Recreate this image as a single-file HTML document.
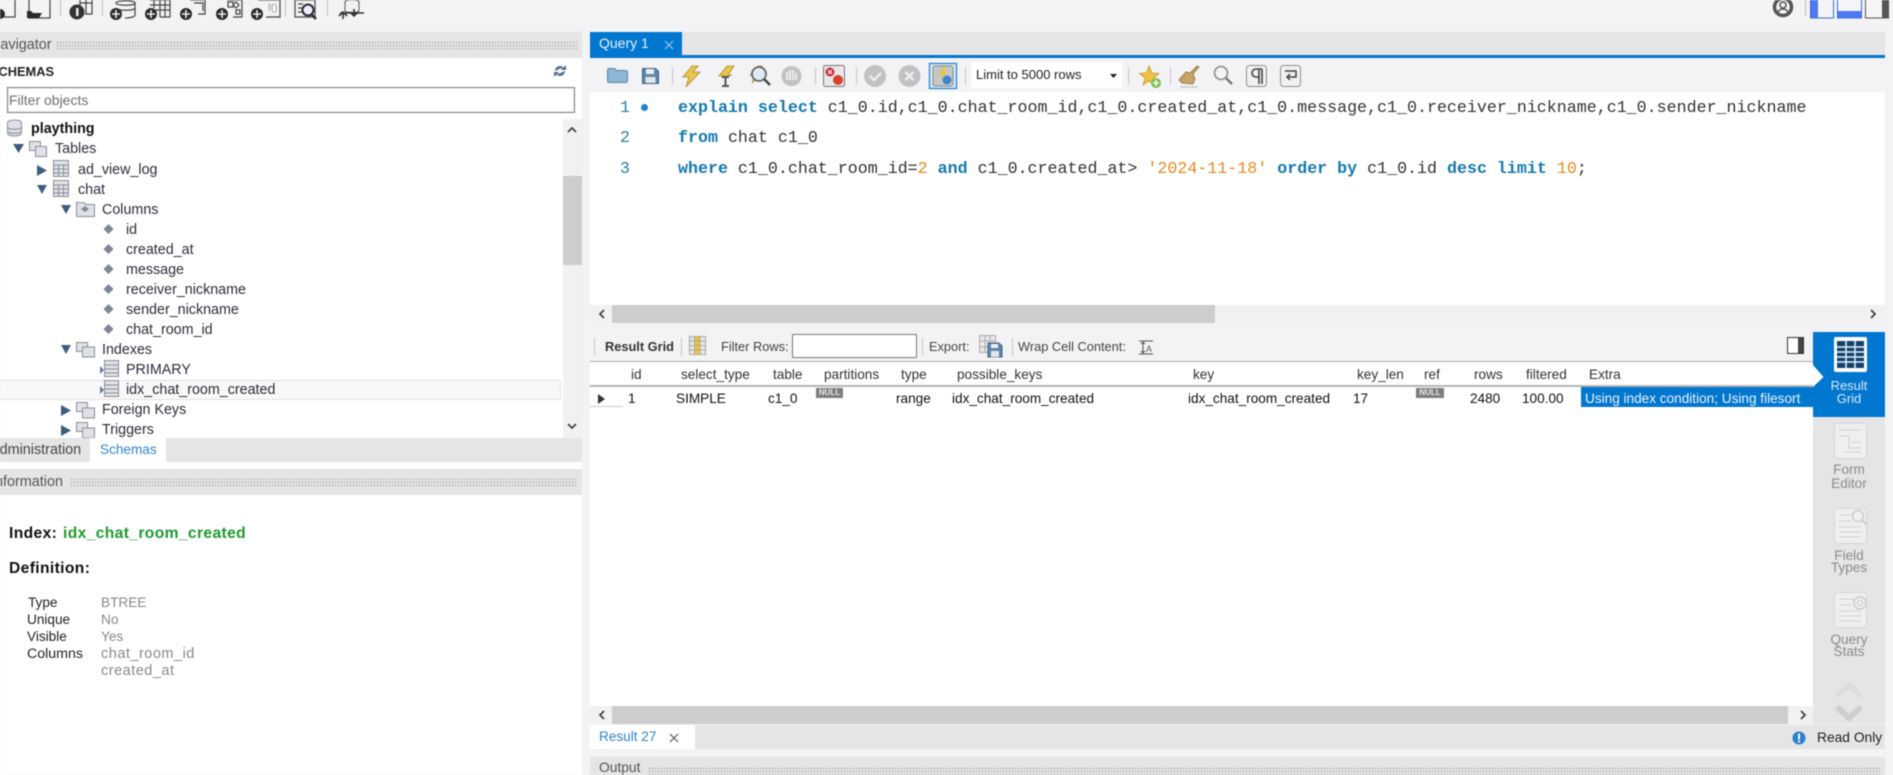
<!DOCTYPE html>
<html><head><meta charset="utf-8"><title>MySQL Workbench</title>
<style>
html,body{margin:0;padding:0;width:1893px;height:775px;overflow:hidden;background:#f3f3f5}
#p{position:relative;width:1893px;height:775px;overflow:hidden;background:#f3f3f5;filter:blur(.4px);font-family:"Liberation Sans",sans-serif;color:#111}
#p div,#p span,#p svg{position:absolute}
#p span{white-space:nowrap;line-height:20px;font-size:13.6px}
.hd{background:#e5e5e5}
.dots{background-image:radial-gradient(#b4b4b4 .7px,transparent .9px);background-size:3px 3px}
.tr span,span.tr{font-size:14.3px!important;color:#2c2c3a}
.sep{width:1px;background:#c4c4c8}
.m{font-family:"Liberation Mono",monospace!important;font-size:16.65px!important;color:#333;white-space:pre!important}
.m b{color:#1479ae}.m i{font-style:normal;color:#e5891f}
.g{color:#888!important}
.h{color:#333}
.ln{color:#2a7f9f;font-size:16.6px!important;font-family:"Liberation Mono",monospace!important}
.side{color:#8b8b8b;text-align:center;width:72px;left:1813px}
#p .rs{font-size:13px}
.nul{background:#7d7d7d;color:#e8e8e8;font-size:8px;font-weight:bold;text-align:center;line-height:10px;height:10px}
#p .bd{font-size:15.6px;letter-spacing:.38px;font-weight:bold;color:#111}
#p .us{font-size:14.5px;letter-spacing:.5px}
</style></head><body>
<div id="p">
<svg style="left:0;top:0" width="1893" height="24" viewBox="0 0 1893 24">
 <g fill="none" stroke="#444" stroke-width="1.2">
  <path d="M-3 0V17H15V0"/><path d="M29 0V18H50V0"/>
  <path d="M80 6V0M92 0V14H85M80 3H92M86 0V14"/>
  <path d="M116 3c0-3 19-3 19 0v12c0 2-5 3-10 3M116 3c0 3 19 3 19 0M116 8c0 3 19 3 19 0" />
  <path d="M150 0H170V17H160M154 0V8M160 0V17M165 0V17M150 5H170M150 10H170"/>
  <path d="M190 0H205V14H198M194 3H203V11"/>
  <path d="M227 0H242V17H233M228 2h5v5h-5zM236 2l3 3-3 3-3-3zM236 10h4v4h-4z"/>
  <path d="M258 0H280V17H266"/>
  <path d="M295 0H315V17H295zM298 4h5M298 8h5M298 12h5"/>
 </g>
 <text x="268" y="11" font-size="10" fill="#999" font-family="Liberation Sans">f()</text>
 <circle cx="0" cy="14" r="5" fill="#2a2a2a"/>
 <path d="M27 18V11H31L33 13H42L39 18Z" fill="#2a2a2a"/>
 <circle cx="77" cy="12" r="7.5" fill="#333"/><rect x="76" y="8" width="2.5" height="8" fill="#eee"/>
 <g fill="#2b2b2b"><circle cx="116" cy="14" r="6"/><circle cx="151" cy="14" r="6"/><circle cx="186" cy="14" r="6"/><circle cx="222" cy="14" r="6"/><circle cx="257" cy="14" r="6"/></g>
 <g stroke="#eee" stroke-width="1.6"><path d="M112 14h8M116 10v8M147 14h8M151 10v8M182 14h8M186 10v8M218 14h8M222 10v8M253 14h8M257 10v8"/></g>
 <circle cx="308" cy="10" r="5.5" fill="#eef" stroke="#2b2b2b" stroke-width="2"/><path d="M311 14l5 5" stroke="#2b2b2b" stroke-width="2.5"/>
 <path d="M345 2c0-3 14-3 14 0v9c0 2-14 2-14 0z" fill="#f2f2f4" stroke="#555"/>
 <path d="M339 16l4-4 4 4M343 12v7M350 12l4 4 4-4M354 16v-7M340 13h24" fill="none" stroke="#333" stroke-width="1.6"/>
 <g fill="#bcc0cc"><rect x="60" width="1" height="16"/><rect x="102" width="1" height="16"/><rect x="285" width="1" height="16"/><rect x="327" width="1" height="16"/><rect x="1805" width="1" height="16"/></g>
 <circle cx="1783" cy="7" r="8.5" fill="none" stroke="#555" stroke-width="3.5"/><circle cx="1783" cy="5" r="3" fill="none" stroke="#555" stroke-width="1.5"/><path d="M1778 12c2-4 8-4 10 0" fill="none" stroke="#555" stroke-width="1.5"/>
 <rect x="1810.5" y="-3" width="23" height="21" fill="#f5f5f8" stroke="#3b66e0"/><rect x="1811" y="-3" width="7" height="21" fill="#4c78f0"/>
 <rect x="1837.5" y="-3" width="24" height="21" fill="#f5f5f8" stroke="#3b66e0"/><rect x="1838" y="11" width="23" height="7" fill="#4c78f0"/>
 <rect x="1865.5" y="-3" width="23" height="21" fill="#f5f5f8" stroke="#555"/><rect x="1882" y="-3" width="7" height="21" fill="#555"/>
</svg>

<!-- LEFT -->
<div style="left:0;top:32px;width:582px;height:743px;background:#fff"></div>
<div class="hd" style="left:0;top:32px;width:582px;height:26px"></div>
<span style="left:-10px;top:35px;font-size:14.4px;color:#555">Navigator</span>
<div class="dots" style="left:56px;top:41px;width:521px;height:9px"></div>
<span style="left:-10px;top:62px;font-size:12.8px;font-weight:bold;color:#222">SCHEMAS</span>
<svg style="left:553px;top:64px" width="14" height="14" viewBox="0 0 14 14"><path d="M2 7A5 5 0 0 1 10 3L8 6h5V1l-2 2M12 7A5 5 0 0 1 4 11l2-3H1v5l2-2" fill="#4f7291"/></svg>
<div style="left:7px;top:87px;width:566px;height:24px;border:1px solid #7f7f7f;background:#fff;box-shadow:inset 0 0 0 1px #eee"></div>
<span style="left:9px;top:90px;font-size:14px;color:#6e6e6e">Filter objects</span>

<!-- scrollbar -->
<div style="left:563px;top:119px;width:19px;height:319px;background:#f1f1f1"></div>
<div style="left:563px;top:176px;width:19px;height:89px;background:#cdcdcd"></div>
<svg style="left:566px;top:124px" width="12" height="312" viewBox="0 0 12 312"><path d="M2 8l4-4 4 4M2 300l4 4 4-4" fill="none" stroke="#444" stroke-width="1.8"/></svg>

<div style="left:0;top:380px;width:560px;height:18px;background:#f8f8f8;border:1px solid #e2e2e2;border-left:0"></div>

<div class="tr" style="left:0;top:0;width:582px;height:438px;overflow:hidden">
<span style="left:31px;top:119px;font-weight:bold;color:#111">plaything</span>
<span style="left:55px;top:139px">Tables</span>
<span style="left:78px;top:160px">ad_view_log</span>
<span style="left:78px;top:180px">chat</span>
<span style="left:102px;top:200px">Columns</span>
<span style="left:126px;top:220px">id</span>
<span style="left:126px;top:240px">created_at</span>
<span style="left:126px;top:260px">message</span>
<span style="left:126px;top:280px">receiver_nickname</span>
<span style="left:126px;top:300px">sender_nickname</span>
<span style="left:126px;top:320px">chat_room_id</span>
<span style="left:102px;top:340px">Indexes</span>
<span style="left:126px;top:360px">PRIMARY</span>
<span style="left:126px;top:380px">idx_chat_room_created</span>
<span style="left:102px;top:400px">Foreign Keys</span>
<span style="left:102px;top:420px">Triggers</span>
</div>
<svg style="left:0;top:0" width="130" height="438" viewBox="0 0 130 438">
 <g fill="#3f5b80">
  <path d="M13 144H24L18.500 153Z"/><path d="M37 165L47 170.500 37 176Z"/><path d="M37 185H47L42 194Z"/>
  <path d="M61 205H71L66 214Z"/><path d="M61 345H71L66 354Z"/><path d="M61 405L71 410.500 61 416Z"/><path d="M61 425L71 430.500 61 436Z"/>
  <path d="M100 366l4 4-4 4zM100 386l4 4-4 4z" fill="#6a7b90"/>
 </g>
 <g fill="#dfe1e6" stroke="#8a8f98">
  <path d="M7.500 123c0-4 14-4 14 0v10c0 4-14 4-14 0z"/><path d="M7.500 127c0 3 14 3 14 0M7.500 131c0 3 14 3 14 0" fill="none"/>
  <rect x="29.500" y="141.500" width="11" height="9"/><rect x="35.500" y="146.500" width="11" height="10"/>
  <rect x="53.500" y="160.500" width="15" height="16"/><rect x="53.500" y="180.500" width="15" height="16"/>
  <path d="M53.500 165H68M53.500 169H68M53.500 173H68M58.500 165V176M63.500 165V176M53.500 185H68M53.500 189H68M53.500 193H68M58.500 185V196M63.500 185V196" fill="none"/>
  <path d="M76.500 202.500H84L86 204.500H94.500V216.500H76.500Z"/>
  <rect x="76.500" y="342.500" width="11" height="9"/><rect x="82.500" y="347" width="12" height="10"/>
  <rect x="76.500" y="402.500" width="11" height="9"/><rect x="82.500" y="408" width="12" height="10"/>
  <rect x="76.500" y="422.500" width="11" height="9"/><rect x="82.500" y="428" width="12" height="10"/>
  <rect x="104.500" y="360.500" width="14" height="16"/><rect x="104.500" y="380.500" width="14" height="16"/>
  <path d="M104.500 365H118M104.500 369H118M104.500 373H118M104.500 385H118M104.500 389H118M104.500 393H118" fill="none"/>
 </g>
 <path d="M81 209l4-3 4 3-4 3z" fill="#808a98"/>
 <g fill="#7d8796"><path d="M108.500 224l5 5-5 5-5-5zM108.500 244l5 5-5 5-5-5zM108.500 264l5 5-5 5-5-5zM108.500 284l5 5-5 5-5-5zM108.500 304l5 5-5 5-5-5zM108.500 324l5 5-5 5-5-5z"/></g>
</svg>

<div class="hd" style="left:0;top:438px;width:582px;height:24px"></div>
<div style="left:90px;top:438px;width:76px;height:24px;background:#fff"></div>
<span style="left:-10px;top:440px;font-size:14.4px;color:#444">Administration</span>
<span style="left:100px;top:440px;font-size:13.6px;color:#2f84cf">Schemas</span>
<div class="hd" style="left:0;top:469px;width:582px;height:26px"></div>
<span style="left:-9px;top:472px;font-size:14.4px;color:#555">Information</span>
<div class="dots" style="left:70px;top:478px;width:507px;height:9px"></div>

<span class="bd" style="left:9px;top:524px">Index:</span>
<span class="bd" style="left:63px;top:524px;color:#1d9a2c">idx_chat_room_created</span>
<span class="bd" style="left:9px;top:559px">Definition:</span>
<span style="left:28px;top:593px;font-size:13.600px;color:#222">Type</span><span style="left:101px;top:593px" class="g">BTREE</span>
<span style="left:27px;top:610px;font-size:13.600px;color:#222">Unique</span><span style="left:101px;top:610px" class="g">No</span>
<span style="left:27px;top:627px;font-size:13.600px;color:#222">Visible</span><span style="left:101px;top:627px" class="g">Yes</span>
<span style="left:27px;top:644px;font-size:14.200px;color:#222">Columns</span><span style="left:101px;top:644px" class="g us">chat_room_id</span>
<span style="left:101px;top:661px" class="g us">created_at</span>

<!-- RIGHT: query -->
<div class="hd" style="left:590px;top:32px;width:1295px;height:23px"></div>
<div style="left:590px;top:32px;width:92px;height:23px;background:#0277cf"></div>
<div style="left:590px;top:55px;width:1295px;height:3px;background:#0277cf"></div>
<span style="left:599px;top:33px;font-size:14px;color:#e8f2fb">Query 1</span>
<svg style="left:664px;top:40px" width="10" height="10" viewBox="0 0 10 10"><path d="M1 1l8 8M9 1l-8 8" stroke="#9cc7ea" stroke-width="1.200"/></svg>

<!-- query toolbar -->
<svg style="left:590px;top:58px" width="720" height="34" viewBox="590 58 720 34">
 <path d="M607.500 70.500q0-2 2-2h5l2 2h9q2 0 2 2v8q0 2-2 2h-16q-2 0-2-2z" fill="#8db7d4" stroke="#5a84a4"/>
 <path d="M642.500 68.500h13l3 3v12h-16z" fill="#5d89ad" stroke="#3d5f7c"/><rect x="646" y="69" width="8" height="5" fill="#e8eef3"/><rect x="645.500" y="77" width="10" height="6" fill="#dfe6ec"/>
 <g fill="#e9c54a" stroke="#a8892a" stroke-width=".8"><path d="M692 66l-9 11h6l-3 10 14-15h-7l5-6z"/><path d="M727 66l-8 10h5l-2 2 10-3h-4l6-9z"/><path d="M758 66l-8 9h5l-3 8 12-12h-6l4-5z"/></g>
 <path d="M722 77h7M725.500 77v9M722 86h7" stroke="#555" stroke-width="2" fill="none"/>
 <circle cx="759" cy="74" r="7" fill="#dfeaf2" stroke="#666" stroke-width="1.800"/><path d="M764 79l6 6" stroke="#444" stroke-width="2.500"/>
 <circle cx="791.500" cy="76" r="10" fill="#c2c2c2"/><path d="M787 80v-8M790 80v-10M793 80v-10M796 80v-7" stroke="#eee" stroke-width="2"/>
 <rect x="823.500" y="65.500" width="21" height="21" rx="2" fill="#e8e8e8" stroke="#777"/><circle cx="830" cy="72" r="4.500" fill="#c8303c"/><circle cx="838" cy="80" r="5" fill="#d9402c"/><path d="M828 70l4 4M832 70l-4 4" stroke="#fff"/>
 <circle cx="875" cy="76" r="11" fill="#c2c2c2"/><path d="M870 76l4 4 7-7" stroke="#eee" stroke-width="2.500" fill="none"/>
 <circle cx="909.500" cy="76" r="11" fill="#c2c2c2"/><path d="M905.500 72l8 8M913.500 72l-8 8" stroke="#eee" stroke-width="2.500"/>
 <rect x="929.500" y="63.500" width="27" height="25" fill="#dce9f5" stroke="#2a84d0" stroke-width="1.300"/><rect x="933" y="66" width="20" height="20" rx="2" fill="#c6c6c6" stroke="#888"/><path d="M944 67l-6 8h4l-2 5 8-8h-4l3-5z" fill="#e3c64a"/><circle cx="947" cy="80" r="4.500" fill="#3b84d0"/>
 <rect x="971" y="62" width="151" height="26" fill="#fff"/>
 <path d="M1110 74h7l-3.500 4z" fill="#222"/>
 <g fill="#c4c4c8"><rect x="672" y="67" width="1" height="18"/><rect x="815" y="67" width="1" height="18"/><rect x="856" y="67" width="1" height="18"/><rect x="965" y="67" width="1" height="18"/><rect x="1128" y="67" width="1" height="18"/><rect x="1170" y="67" width="1" height="18"/></g>
 <path d="M1149 66l3 7 7 .5-5.500 4.500 2 7-6.500-4-6 4 2-7-5.500-4.500 7-.5z" fill="#f1c240" stroke="#c7952a" stroke-width=".8"/>
 <circle cx="1156" cy="83" r="5" fill="#7cc050"/><path d="M1153 83h6M1156 80v6" stroke="#fff" stroke-width="1.600"/>
 <path d="M1197 66l-7 7-4-1-7 8 3 3 11 1 2-5-2-5 6-7z" fill="#c6a468" stroke="#8a6f3e" stroke-width=".8"/><path d="M1180 87h18" stroke="#ccc" stroke-width="1.500"/>
 <circle cx="1221" cy="73" r="6.500" fill="#f2f4f6" stroke="#8a8a8a" stroke-width="1.600"/><path d="M1226 78l6 6" stroke="#777" stroke-width="2.500"/>
 <rect x="1246.500" y="65.500" width="20" height="21" rx="3" fill="#f1f1f1" stroke="#8f8f8f"/><path d="M1259 69v15M1262 69v15M1262 69h-6a4 4 0 0 0 0 8h3" stroke="#444" stroke-width="1.600" fill="none"/>
 <rect x="1280.500" y="65.500" width="20" height="21" rx="3" fill="#f1f1f1" stroke="#8f8f8f"/>
</svg>
<svg style="left:1280px;top:63px" width="22" height="24" viewBox="0 0 22 24"><path d="M5 8h11v6H8M10 11l-3 3 3 3" fill="none" stroke="#444" stroke-width="1.500"/></svg>
<span style="left:976px;top:65px;font-size:13px;color:#222">Limit to 5000 rows</span>

<!-- editor -->
<div style="left:590px;top:92px;width:1295px;height:231px;background:#fff"></div>
<span class="ln" style="left:620px;top:98px">1</span>
<span class="ln" style="left:620px;top:128px">2</span>
<span class="ln" style="left:620px;top:159px">3</span>
<div style="left:641px;top:104px;width:7px;height:7px;border-radius:50%;background:#1a84d2"></div>
<span class="m" style="left:678px;top:98px"><b style="position:static">explain select</b> c1_0.id,c1_0.chat_room_id,c1_0.created_at,c1_0.message,c1_0.receiver_nickname,c1_0.sender_nickname</span>
<span class="m" style="left:678px;top:128px"><b>from</b> chat c1_0</span>
<span class="m" style="left:678px;top:159px"><b>where</b> c1_0.chat_room_id=<i>2</i> <b>and</b> c1_0.created_at&gt; <i>'2024-11-18'</i> <b>order by</b> c1_0.id <b>desc limit</b> <i>10</i>;</span>
<div style="left:590px;top:305px;width:1295px;height:18px;background:#f1f1f1"></div>
<div style="left:612px;top:305px;width:603px;height:18px;background:#cdcdcd"></div>
<svg style="left:590px;top:305px" width="1295" height="18" viewBox="0 0 1295 18"><path d="M14 5l-4 4 4 4M1281 5l4 4-4 4" fill="none" stroke="#444" stroke-width="1.800"/></svg>

<!-- result toolbar -->
<div style="left:590px;top:332px;width:1223px;height:29px;background:#f3f3f5"></div>
<div class="sep" style="left:594px;top:338px;height:18px"></div>
<span style="left:605px;top:337px;font-size:12.800px;font-weight:bold;color:#333">Result Grid</span>
<div class="sep" style="left:681px;top:338px;height:18px"></div>
<svg style="left:689px;top:336px" width="17" height="20" viewBox="0 0 17 20"><rect x=".5" y=".5" width="16" height="18" fill="#e6e6e6" stroke="#aaa"/><rect x="6" y="1" width="5" height="17" fill="#f1c535"/><path d="M0 5h17M0 9.500h17M0 14h17M5.500 0v19M11 0v19" stroke="#999" stroke-width=".7"/></svg>
<span style="left:721px;top:337px;font-size:12.800px;color:#444">Filter Rows:</span>
<div style="left:792px;top:334px;width:123px;height:22px;background:#fff;border:1px solid #7a7a7a"></div>
<div class="sep" style="left:922px;top:338px;height:18px"></div>
<span style="left:929px;top:337px;font-size:12.800px;color:#444">Export:</span>
<svg style="left:979px;top:335px" width="24" height="23" viewBox="0 0 24 23"><rect x=".5" y=".5" width="16" height="17" fill="#e8e8e8" stroke="#aaa"/><path d="M0 6h16M0 12h16M6 0v17M11 0v17" stroke="#aaa"/><path d="M9 8h11l3 3v11H9z" fill="#5b88ad" stroke="#3e6484"/><rect x="12" y="9" width="7" height="4" fill="#eee"/><rect x="12" y="16" width="8" height="6" fill="#e5e5e5"/></svg>
<div class="sep" style="left:1012px;top:338px;height:18px"></div>
<span style="left:1018px;top:337px;font-size:12.800px;color:#444">Wrap Cell Content:</span>
<svg style="left:1139px;top:340px" width="15" height="15" viewBox="0 0 15 15"><path d="M0 1h14M0 14h14M4 2v11M2 4l2-2 2 2M2 11l2 2 2-2" stroke="#555" fill="none"/><text x="7" y="12" font-size="9" fill="#555" font-family="Liberation Sans">A</text></svg>
<svg style="left:1787px;top:337px" width="17" height="17" viewBox="0 0 17 17"><rect x=".5" y=".5" width="16" height="16" fill="#fff" stroke="#333"/><rect x="11" y="1" width="5" height="15" fill="#444"/></svg>

<!-- grid -->
<div style="left:590px;top:361px;width:1223px;height:345px;background:#fff"></div>
<div style="left:590px;top:361px;width:1223px;height:1px;background:#aaa"></div>
<div style="left:590px;top:385px;width:1223px;height:2px;background:#b4b4b4"></div>
<div style="left:590px;top:406px;width:33px;height:1px;background:#ccc"></div>
<svg style="left:590px;top:362px" width="1000" height="46" viewBox="590 362 1000 46"><g stroke="#e4e4e4"><path d="M590.500 0V24M622.500 0V46M672.500 0V24M763.500 0V24M814.500 0V24M892.500 0V24M948.500 0V24M1185.500 0V24M1348.500 0V24M1416.500 0V24M1466.500 0V24M1517.500 0V24M1581.500 0V24"/></g><path d="M598 394l7 5-7 5z" fill="#333"/></svg>
<span style="left:631px;top:365px" class="h">id</span>
<span style="left:681px;top:365px" class="h">select_type</span>
<span style="left:773px;top:365px" class="h">table</span>
<span style="left:824px;top:365px" class="h">partitions</span>
<span style="left:901px;top:365px" class="h">type</span>
<span style="left:957px;top:365px" class="h">possible_keys</span>
<span style="left:1193px;top:365px" class="h">key</span>
<span style="left:1357px;top:365px" class="h">key_len</span>
<span style="left:1424px;top:365px" class="h">ref</span>
<span style="left:1474px;top:365px" class="h">rows</span>
<span style="left:1526px;top:365px" class="h">filtered</span>
<span style="left:1589px;top:365px" class="h">Extra</span>
<span style="left:628px;top:389px">1</span>
<span style="left:676px;top:389px">SIMPLE</span>
<span style="left:768px;top:389px">c1_0</span>
<div class="nul" style="left:816px;top:388px;width:27px">NULL</div>
<span style="left:896px;top:389px">range</span>
<span style="left:952px;top:389px">idx_chat_room_created</span>
<span style="left:1188px;top:389px">idx_chat_room_created</span>
<span style="left:1353px;top:389px">17</span>
<div class="nul" style="left:1416px;top:388px;width:28px">NULL</div>
<span style="left:1470px;top:389px">2480</span>
<span style="left:1522px;top:389px">100.00</span>
<div style="left:1581px;top:387px;width:232px;height:20px;background:#0277cf"></div>
<span style="left:1585px;top:389px;color:#e8f3fc">Using index condition; Using filesort</span>

<!-- side tabs -->
<div class="hd" style="left:1813px;top:332px;width:72px;height:392px"></div>
<div style="left:1813px;top:332px;width:72px;height:85px;background:#0277cf"></div>
<svg style="left:1813px;top:332px" width="72" height="296" viewBox="1813 332 72 296">
 <path d="M1813 365L1823.500 377 1813 387Z" fill="#fff"/>
 <rect x="1834" y="337" width="33" height="35" rx="2" fill="#fff"/><rect x="1837" y="341" width="27" height="27" fill="#12426e"/>
 <path d="M1837 347h27M1837 352h27M1837 357h27M1837 362h27M1846 341v27M1855 341v27" stroke="#e8f1f9" stroke-width="1.500"/>
 <g fill="#efefef" stroke="#d4d4d4">
  <rect x="1834.500" y="423.500" width="32" height="35" rx="2"/><rect x="1834.500" y="508.500" width="32" height="35" rx="2"/><rect x="1834.500" y="592.500" width="32" height="35" rx="2"/>
 </g>
 <path d="M1839 430h22M1839 436h10v12h12M1852 442h9M1844 452h17M1839 515h15M1839 521h12M1839 527h22M1839 532h22M1839 537h22M1839 599h15M1839 605h12M1839 611h22M1839 616h22M1839 621h22" stroke="#d0d0d0" fill="none"/>
 <circle cx="1858" cy="516" r="5.500" fill="none" stroke="#ccc" stroke-width="1.500"/><path d="M1862 520l5 5" stroke="#ccc" stroke-width="2"/>
 <circle cx="1860" cy="603" r="6" fill="none" stroke="#ccc" stroke-width="1.500"/><circle cx="1860" cy="603" r="2.500" fill="none" stroke="#ccc"/>
</svg>
<span class="side rs" style="top:376px;color:#d8e9f7">Result</span>
<span class="side rs" style="top:389px;color:#d8e9f7">Grid</span>
<span class="side" style="top:460px">Form</span>
<span class="side" style="top:474px">Editor</span>
<span class="side" style="top:546px">Field</span>
<span class="side" style="top:558px">Types</span>
<span class="side" style="top:630px">Query</span>
<span class="side" style="top:642px">Stats</span>
<svg style="left:1813px;top:680px" width="72" height="44" viewBox="0 0 72 44"><path d="M24 16l12-11 12 11" fill="none" stroke="#dcdcdc" stroke-width="5"/><path d="M24 27l12 11 12-11" fill="none" stroke="#cfcfcf" stroke-width="6"/></svg>

<!-- bottom scrollbar -->
<div style="left:590px;top:706px;width:1223px;height:18px;background:#f1f1f1"></div>
<div style="left:612px;top:706px;width:1176px;height:18px;background:#cdcdcd"></div>
<svg style="left:590px;top:706px" width="1223" height="18" viewBox="0 0 1223 18"><path d="M14 5l-4 4 4 4M1211 5l4 4-4 4" fill="none" stroke="#444" stroke-width="1.800"/></svg>

<!-- bottom tabs -->
<div class="hd" style="left:590px;top:725px;width:1295px;height:24px"></div>
<div style="left:590px;top:725px;width:105px;height:24px;background:#fff"></div>
<span style="left:599px;top:727px;font-size:13.600px;color:#2f84cf">Result 27</span>
<svg style="left:669px;top:733px" width="10" height="10" viewBox="0 0 10 10"><path d="M1 1l8 8M9 1l-8 8" stroke="#555" stroke-width="1.200"/></svg>
<svg style="left:1792px;top:730px" width="14" height="16" viewBox="0 0 14 16"><circle cx="7" cy="8" r="6.500" fill="#2a7fd0"/><rect x="6" y="3.500" width="2" height="6" fill="#fff"/><rect x="6" y="10.500" width="2" height="2" fill="#fff"/></svg>
<span style="left:1817px;top:728px;font-size:13.800px;color:#222">Read Only</span>

<div class="hd" style="left:590px;top:757px;width:1295px;height:18px"></div>
<span style="left:599px;top:758px;font-size:13.800px;color:#555">Output</span>
<div class="dots" style="left:648px;top:767px;width:1232px;height:8px"></div>
</div>
</body></html>
